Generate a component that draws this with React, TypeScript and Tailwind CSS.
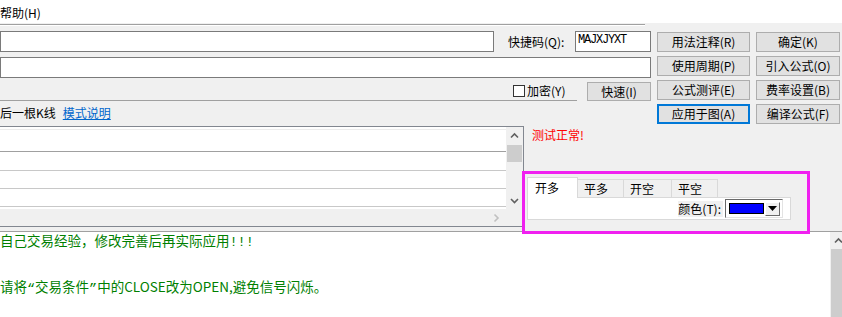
function Chevron({ dir, color = "#606060" }: { dir: "up" | "down" | "right"; color?: string }) {
  if (dir === "right") {
    return (
      <svg width="7" height="10" viewBox="0 0 7 10">
        <polyline points="1.5,1.5 5,5 1.5,8.5" fill="none" stroke={color} strokeWidth="1.6" />
      </svg>
    );
  }
  const pts = dir === "up" ? "1,5.5 4.5,2 8,5.5" : "1,2 4.5,5.5 8,2";
  return (
    <svg width="9" height="7" viewBox="0 0 9 7">
      <polyline points={pts} fill="none" stroke={color} strokeWidth="1.6" />
    </svg>
  );
}

function Btn({ children, focus, className = "" }: { children: React.ReactNode; focus?: boolean; className?: string }) {
  const border = focus ? "border-2 border-[#0078d7]" : "border border-[#adadad]";
  return (
    <div className={"flex items-center justify-center bg-[#e1e1e1] whitespace-nowrap " + border + " " + className}>
      {children}
    </div>
  );
}

const buttons = [
  ["用法注释(R)", "确定(K)"],
  ["使用周期(P)", "引入公式(O)"],
  ["公式测评(E)", "费率设置(B)"],
  ["应用于图(A)", "编译公式(F)"],
];

const tabs = ["平多", "开空", "平空"];

export default function App() {
  return (
    <div className="relative w-[842px] h-[317px] overflow-hidden bg-[#f0f0f0] text-[12px] text-black font-['Noto_Sans_CJK_SC',sans-serif]">
      {/* menu bar */}
      <div className="h-[23px] bg-white pt-[5px] leading-[16px]">
        <span className="inline-block">帮助(H)</span>
      </div>
      <div className="mt-[1px] w-[645px] border-t border-[#a0a0a0] border-b border-b-white" />

      {/* editor head */}
      <div className="mt-[5px] flex items-start">
        <div className="w-[651px] shrink-0">
          <div className="flex items-center h-[21px]">
            <div className="w-[494px] h-[21px] bg-white border border-[#7a7a7a]" />
            <span className="ml-[14px] leading-[21px] whitespace-nowrap">快捷码(Q):</span>
            <div className="ml-auto w-[76px] h-[21px] bg-white border border-[#7a7a7a] pl-[2px] font-['Liberation_Mono',monospace] text-[12px] tracking-[-1.2px] leading-[17px]">
              MAJXJYXT
            </div>
          </div>
          <div className="mt-[5px] h-[21px] bg-white border border-[#7a7a7a]" />
          <div className="mt-[4px] flex h-[19px]">
            <div className="w-[577px] border-b border-[#a0a0a0] flex items-center justify-end pr-[5px] pb-[1px]">
              <div className="w-[12px] h-[12px] border border-[#333333] bg-white" />
              <span className="ml-[2px] w-[45px] whitespace-nowrap">加密(Y)</span>
            </div>
            <Btn className="ml-[10px] w-[64px] h-[19px]">快速(I)</Btn>
          </div>
          <div className="flex items-center h-[25px] pb-[2px] whitespace-nowrap">
            <span>后一根K线</span>
            <span className="ml-[7px] text-[#0066cc] underline">模式说明</span>
          </div>
        </div>

        <div className="ml-[6px] mt-[1px] grid grid-cols-[93px_84px] gap-x-[6px] gap-y-[4px]">
          {buttons.map(([a, b], i) => (
            <>
              <Btn key={a} focus={i === 3} className="h-[20px]">{a}</Btn>
              <Btn key={b} className="h-[20px]">{b}</Btn>
            </>
          ))}
        </div>
      </div>

      {/* list + test result */}
      <div className="flex h-[105px]">
        <div className="w-[524px] h-[101px] shrink-0 border border-l-0 border-[#828790] flex flex-col">
          <div className="flex h-[82px]">
            <div className="flex-1 bg-white">
              <div className="h-[25px] border-b border-[#a0a0a0] pt-[2px]">
                <div className="border-t border-[#ececec]" />
              </div>
              <div className="h-[19px] border-b border-[#c8c8c8]" />
              <div className="h-[18px] border-b border-[#c8c8c8]" />
              <div className="h-[18px] border-b border-[#c8c8c8]" />
            </div>
            <div className="w-[17px] flex flex-col">
              <div className="h-[17px] flex items-center justify-center">
                <Chevron dir="up" />
              </div>
              <div className="mt-[1px] mx-[1px] h-[17px] bg-[#cdcdcd]" />
              <div className="flex-1" />
              <div className="h-[17px] flex items-center justify-center">
                <Chevron dir="down" />
              </div>
            </div>
          </div>
          <div className="flex flex-1">
            <div className="flex-1 flex items-center justify-end pr-[6px]">
              <Chevron dir="right" color="#c0c0c0" />
            </div>
            <div className="w-[17px]" />
          </div>
        </div>

        <div className="flex-1 flex flex-col">
          <div className="ml-[8px] pt-[1px] leading-[16px] text-[#ff0000]">测试正常!</div>
          <div className="ml-[3px] mt-[34px] w-[264px]">
            <div className="flex items-end h-[20px]">
              <div className="relative z-10 -mb-[1px] w-[51px] h-[21px] bg-white border border-b-0 border-[#d9d9d9] pl-[7px] leading-[20px]">
                开多
              </div>
              {tabs.map((t, i) => (
                <div
                  key={t}
                  className={
                    "h-[18px] bg-[#f0f0f0] border border-b-0 border-l-0 border-[#d9d9d9] pl-[6px] leading-[17px] " +
                    (i === 1 ? "w-[48px]" : "w-[46px]")
                  }
                >
                  {t}
                </div>
              ))}
            </div>
            <div className="h-[23px] bg-white border border-[#d9d9d9] flex items-center justify-end pr-[7px]">
              <span className="bg-[#f0f0f0] leading-[16px] pr-[2px] whitespace-nowrap">颜色(T):</span>
              <div className="ml-[2px] w-[58px] h-[19px] bg-white border border-t-[#696969] border-l-[#696969] border-b-[#e3e3e3] border-r-[#e3e3e3] flex items-center pr-[2px]">
                <div className="ml-[3px] w-[35px] h-[11px] bg-[#0000ff] border border-black" />
                <div className="ml-auto w-[15px] h-[14px] bg-[#f0f0f0] border border-t-white border-l-white border-b-[#696969] border-r-[#696969] flex items-center justify-center">
                  <svg width="9" height="5" viewBox="0 0 9 5">
                    <polygon points="0,0 9,0 4.5,5" fill="#000000" />
                  </svg>
                </div>
              </div>
            </div>
          </div>
        </div>
      </div>

      {/* description edit */}
      <div className="w-[847px] h-[86px] flex bg-white border-t border-[#a0a0a0]">
        <div className="flex-1 text-[#008000] text-[13.5px] whitespace-nowrap">
          <div className="leading-[16px]">
            自己交易经验，修改完善后再实际应用<span className="font-['Liberation_Mono',monospace]">!!!</span>
          </div>
          <div className="mt-[27px] leading-[16px]">
            请将<span className="font-['Liberation_Mono',monospace]">“</span>交易条件
            <span className="font-['Liberation_Mono',monospace]">”</span>中的CLOSE改为OPEN,避免信号闪烁。
          </div>
        </div>
        <div className="w-[17px] flex flex-col bg-[#f0f0f0]">
          <div className="h-[17px] flex items-center justify-center">
            <Chevron dir="up" />
          </div>
          <div className="flex-1 mx-[1px] bg-[#cdcdcd]" />
        </div>
      </div>

      {/* highlight */}
      <div className="absolute left-[522px] top-[171px] w-[288px] h-[63px] border-[3px] border-[#f020f0] pointer-events-none" />
    </div>
  );
}
